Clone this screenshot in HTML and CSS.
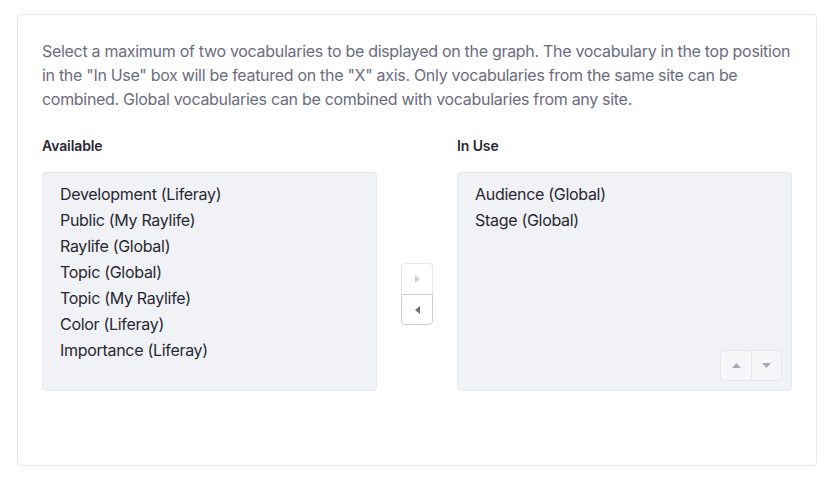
FILE: index.html
```html
<!DOCTYPE html>
<html lang="en">
<head>
<meta charset="utf-8">
<link rel="stylesheet" href="styles.css">
</head>
<body>
<div class="card">
  <p class="desc">Select a maximum of two vocabularies to be displayed on the graph. The vocabulary in the top position in the "In Use" box will be featured on the "X" axis. Only vocabularies from the same site can be combined. Global vocabularies can be combined with vocabularies from any site.</p>
  <div class="selector">
    <div class="col">
      <div class="label">Available</div>
      <ul class="box">
        <li>Development (Liferay)</li>
        <li>Public (My Raylife)</li>
        <li>Raylife (Global)</li>
        <li>Topic (Global)</li>
        <li>Topic (My Raylife)</li>
        <li>Color (Liferay)</li>
        <li>Importance (Liferay)</li>
      </ul>
    </div>
    <div class="mid">
      <div class="btn-group">
        <button class="btn disabled" aria-label="Add">
          <svg width="5" height="8" viewBox="0 0 5 8"><path d="M0 0 L5 4 L0 8 Z" fill="currentColor"/></svg>
        </button>
        <button class="btn" aria-label="Remove">
          <svg width="5" height="8" viewBox="0 0 5 8"><path d="M5 0 L0 4 L5 8 Z" fill="currentColor"/></svg>
        </button>
      </div>
    </div>
    <div class="col">
      <div class="label">In Use</div>
      <div class="box-wrap">
        <ul class="box">
          <li>Audience (Global)</li>
          <li>Stage (Global)</li>
        </ul>
        <div class="order">
          <button class="obtn" aria-label="Move up">
            <svg width="9" height="5" viewBox="0 0 9 5"><path d="M0 5 L4.5 0 L9 5 Z" fill="currentColor"/></svg>
          </button>
          <button class="obtn" aria-label="Move down">
            <svg width="9" height="5" viewBox="0 0 9 5"><path d="M0 0 L4.5 5 L9 0 Z" fill="currentColor"/></svg>
          </button>
        </div>
      </div>
    </div>
  </div>
</div>
</body>
</html>
```

FILE: styles.css
```css
* { box-sizing: border-box; }
html, body { margin: 0; padding: 0; background: #fff; }
body {
  font-family: Inter, "Noto Sans", "Liberation Sans", sans-serif;
  color: #272833;
}
.card {
  margin: 14px 12px 0 17px;
  width: 800px;
  height: 452px;
  border: 1px solid #e7e7ed;
  border-radius: 4px;
  padding: 24px;
}
.desc {
  margin: 0 0 24px 0;
  font-size: 16px;
  line-height: 24px;
  letter-spacing: -0.3px;
  color: #6b6c7e;
}
.selector {
  display: flex;
  gap: 24px;
}
.col { width: 335px; }
.label {
  font-size: 14px;
  font-weight: 600;
  line-height: 21px;
  letter-spacing: -0.1px;
  margin-bottom: 16px;
  color: #272833;
}
.box {
  list-style: none;
  margin: 0;
  height: 219px;
  padding: 8px 17px;
  background: #f1f2f5;
  border: 1px solid #e7e7ed;
  border-radius: 4px;
}
.box li {
  font-size: 16px;
  line-height: 26px;
  letter-spacing: -0.3px;
}
.mid {
  width: 32px;
  padding-top: 128px;
}
.btn-group {
  display: flex;
  flex-direction: column;
  width: 32px;
}
.btn {
  width: 32px;
  height: 31px;
  padding: 0;
  margin: 0;
  background: #fff;
  border: 1px solid #cdced9;
  color: #6b6c7e;
  display: flex;
  align-items: center;
  justify-content: center;
}
.btn:first-child {
  border-radius: 4px 4px 0 0;
  border-bottom: none;
}
.btn:last-child {
  border-radius: 0 0 4px 4px;
  border-top: 1px solid #cdced9;
}
.btn.disabled {
  border-color: #e7e7ed;
  color: #cdced9;
}
.box-wrap { position: relative; }
.order {
  position: absolute;
  right: 10px;
  bottom: 10px;
  display: flex;
}
.obtn {
  width: 31px;
  height: 31px;
  padding: 0;
  margin: 0;
  background: #f5f6f8;
  border: 1px solid #e7e7ed;
  color: #a7a9bc;
  display: flex;
  align-items: center;
  justify-content: center;
}
.obtn:first-child { border-radius: 4px 0 0 4px; border-right: none; }
.obtn:last-child { border-radius: 0 4px 4px 0; }
```
